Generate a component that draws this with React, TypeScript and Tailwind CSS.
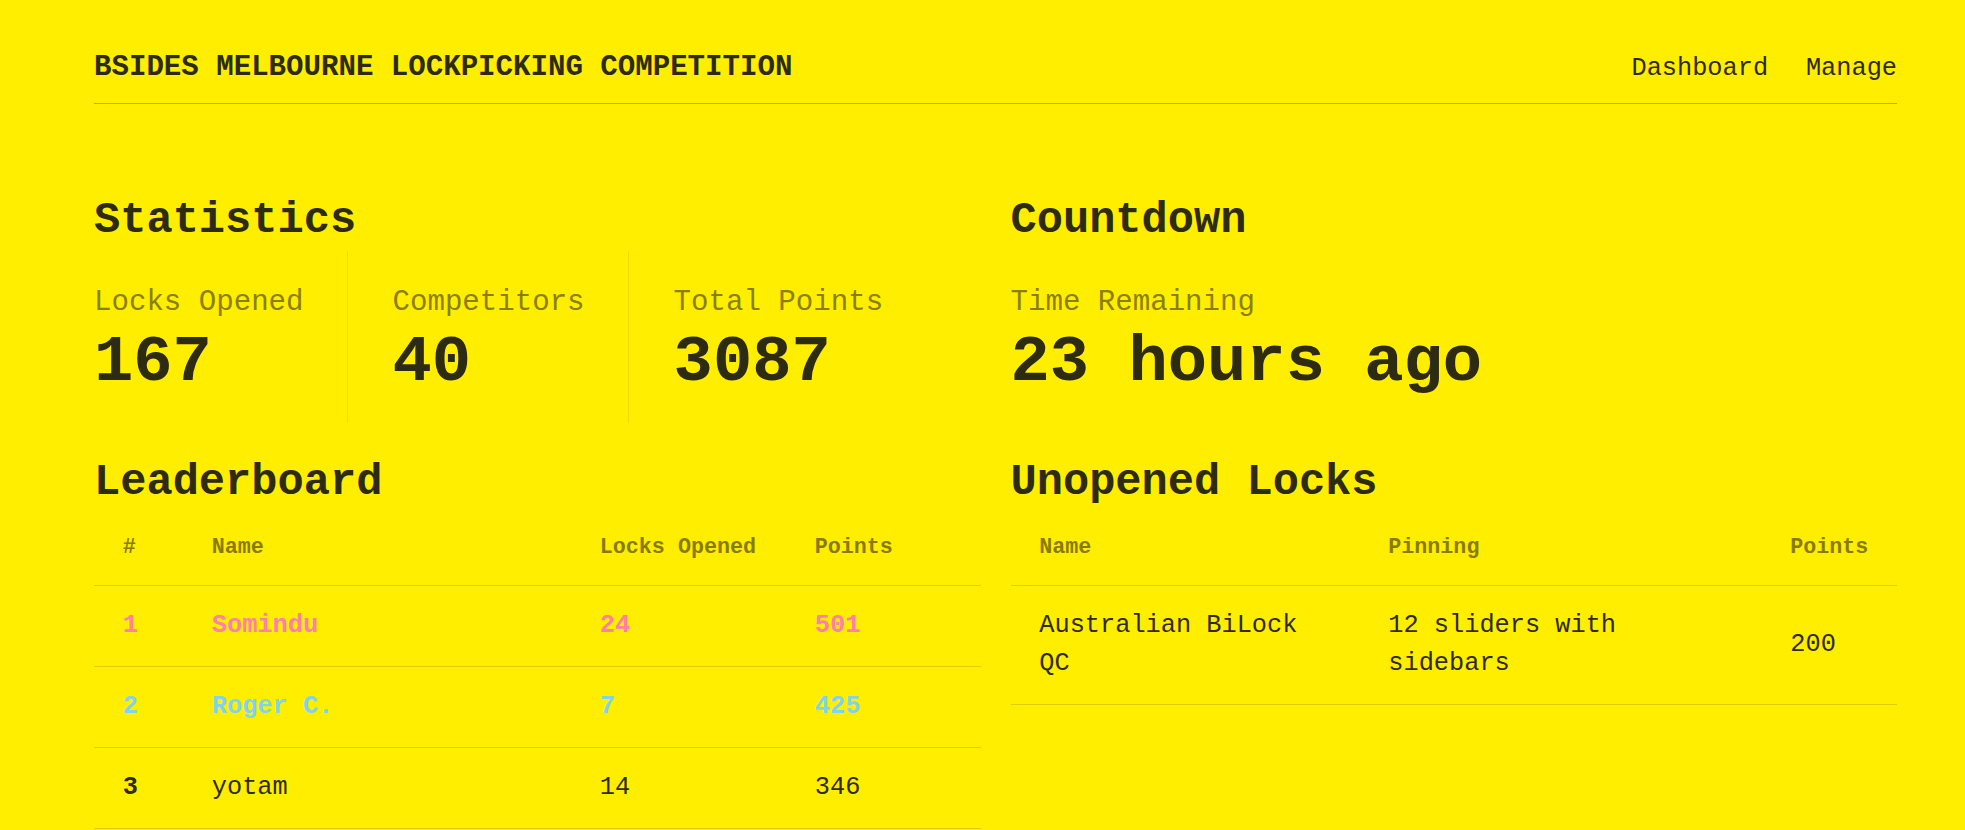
import React from "react";

const leaders = [
  { rank: 1, name: "Somindu", locks: 24, points: 501, tone: "text-[#ff7fae] font-bold" },
  { rank: 2, name: "Roger C.", locks: 7, points: 425, tone: "text-[#80d4f0] font-bold" },
  { rank: 3, name: "yotam", locks: 14, points: 346, tone: "" },
];

const locks = [
  { name: "Australian BiLock QC", pinning: "12 sliders with sidebars", points: 200 },
];

const th = "text-left text-[21.7px] leading-[1.5] font-bold text-[#877c00] py-[21px] px-[28.8px]";
const td = "text-[25.3px] leading-[1.5] py-[21px] px-[28.8px]";

const Stat = ({ label, value, className }: { label: string; value: string; className?: string }) => {
  return (
    <div className={"pt-[30px] pb-[21px] " + (className ?? "")}>
      <div className="text-[29.1px] leading-[43.2px] text-[#8a7f00]">{label}</div>
      <div className="text-[65.5px] leading-[77.8px] font-bold">{value}</div>
    </div>
  );
};

const App = () => {
  return (
    <div className="min-h-screen bg-[#ffee00] text-[#2e2b13] font-['Liberation_Mono',monospace]">
      <div className="ml-[94px] mr-[68px]">
        <header className="flex justify-between items-baseline pt-[50px] pb-[16px] border-b border-[#f27d88]">
          <div className="text-[29.1px] leading-[36px] font-bold">
            BSIDES MELBOURNE LOCKPICKING COMPETITION
          </div>
          <nav className="flex gap-[37.8px] text-[25.3px] leading-[36px]">
            <a>Dashboard</a>
            <a>Manage</a>
          </nav>
        </header>

        <main className="grid grid-cols-2 gap-x-[30px] gap-y-[34px] mt-[91px]">
          <section>
            <h2 className="text-[43.7px] leading-[51.8px] font-bold">Statistics</h2>
            <div className="flex mt-[4px]">
              <Stat label="Locks Opened" value="167" className="pr-[43px] border-r border-[#ebdd00]" />
              <Stat label="Competitors" value="40" className="pl-[45px] pr-[43px] border-r border-[#ebdd00]" />
              <Stat label="Total Points" value="3087" className="pl-[45px]" />
            </div>
          </section>

          <section>
            <h2 className="text-[43.7px] leading-[51.8px] font-bold">Countdown</h2>
            <div className="flex mt-[4px]">
              <Stat label="Time Remaining" value="23 hours ago" />
            </div>
          </section>

          <section>
            <h2 className="text-[43.7px] leading-[51.8px] font-bold">Leaderboard</h2>
            <table className="w-full table-fixed border-collapse mt-[2px]">
              <thead>
                <tr className="border-b border-[#dccf00]">
                  <th className={th + " w-[89px]"}>#</th>
                  <th className={th + " w-[388px]"}>Name</th>
                  <th className={th + " w-[215px]"}>Locks Opened</th>
                  <th className={th}>Points</th>
                </tr>
              </thead>
              <tbody>
                {leaders.map((l) => (
                  <tr key={l.rank} className={"border-b border-[#dccf00] " + l.tone}>
                    <td className={td + " font-bold"}>{l.rank}</td>
                    <td className={td}>{l.name}</td>
                    <td className={td}>{l.locks}</td>
                    <td className={td}>{l.points}</td>
                  </tr>
                ))}
              </tbody>
            </table>
          </section>

          <section>
            <h2 className="text-[43.7px] leading-[51.8px] font-bold">Unopened Locks</h2>
            <table className="w-full table-fixed border-collapse mt-[2px]">
              <thead>
                <tr className="border-b border-[#dccf00]">
                  <th className={th + " w-[349px]"}>Name</th>
                  <th className={th + " w-[402px]"}>Pinning</th>
                  <th className={th}>Points</th>
                </tr>
              </thead>
              <tbody>
                {locks.map((l) => (
                  <tr key={l.name} className="border-b border-[#dccf00]">
                    <td className={td}>{l.name}</td>
                    <td className={td}>{l.pinning}</td>
                    <td className={td}>{l.points}</td>
                  </tr>
                ))}
              </tbody>
            </table>
          </section>
        </main>
      </div>
    </div>
  );
};

export default App;
